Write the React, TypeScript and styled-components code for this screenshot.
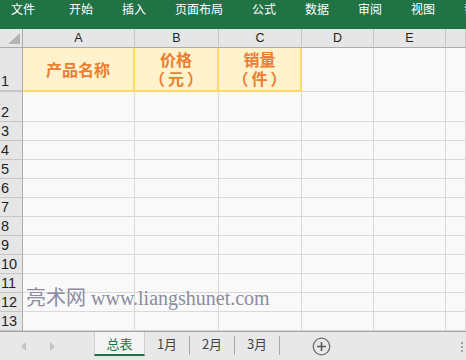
import React from "react";
import styled, { createGlobalStyle } from "styled-components";

const ribbonTabs = ["文件", "开始", "插入", "页面布局", "公式", "数据", "审阅", "视图", "帮助"];
const columns = ["A", "B", "C", "D", "E", ""];
const colWidths = "23px 112px 84px 83px 72px 72px 1fr";
const rowHeights = [44, 30, 19, 19, 19, 19, 19, 19, 19, 19, 19, 19, 19];
const sheetTabs = ["总表", "1月", "2月", "3月"];

// 第一行的表头内容
const titles: Record<number, string[]> = {
  0: ["产品名称"],
  1: ["价格", "（元）"],
  2: ["销量", "（件）"],
};

const App: React.FC = () => {
  return (
    <Frame>
      <GlobalStyle />
      <Ribbon>
        {ribbonTabs.map((t, i) => (
          <RibbonTab key={t} $first={i === 0}>
            {t}
          </RibbonTab>
        ))}
      </Ribbon>

      <SheetArea>
        <Grid style={{ gridTemplateRows: `19px ${rowHeights.map((h) => h + "px").join(" ")}` }}>
          <Corner>
            <svg width="12" height="11" viewBox="0 0 12 11">
              <polygon points="12,0 12,11 0,11" fill="#b4b4b4" />
            </svg>
          </Corner>
          {columns.map((c, i) => (
            <ColHead key={"h" + i}>{c}</ColHead>
          ))}

          {rowHeights.map((_, r) => (
            <React.Fragment key={"r" + r}>
              <RowHead $yellow={r === 0}>{r + 1}</RowHead>
              {columns.map((_, c) => {
                const lines = r === 0 ? titles[c] : undefined;
                if (lines)
                  return (
                    <Cell key={c} $fill>
                      {lines.map((l, k) => (
                        <TitleLine key={k} $paren={k === 1}>
                          {l}
                        </TitleLine>
                      ))}
                    </Cell>
                  );
                return <Cell key={c} />;
              })}
            </React.Fragment>
          ))}
        </Grid>
        <Watermark>亮术网 www.liangshunet.com</Watermark>
      </SheetArea>

      <TabBar>
        <NavArea>
          <Arrow width="5" height="9" viewBox="0 0 5 9">
            <polygon points="5,0 5,9 0,4.5" fill="#c4c4c4" />
          </Arrow>
          <Arrow width="5" height="9" viewBox="0 0 5 9">
            <polygon points="0,0 0,9 5,4.5" fill="#c4c4c4" />
          </Arrow>
        </NavArea>
        {sheetTabs.map((t, i) => (
          <React.Fragment key={t}>
            <SheetTab $active={i === 0}>{t}</SheetTab>
            {i > 0 && <Divider />}
          </React.Fragment>
        ))}
        <AddButton>
          <svg width="19" height="19" viewBox="0 0 19 19">
            <circle cx="9.5" cy="9.5" r="8.3" fill="none" stroke="#6e6e6e" strokeWidth="1.3" />
            <path d="M9.5 5v9M5 9.5h9" stroke="#5a5a5a" strokeWidth="1.6" />
          </svg>
        </AddButton>
        <Dots>
          <span />
          <span />
          <span />
        </Dots>
      </TabBar>
    </Frame>
  );
};

export default App;

const GlobalStyle = createGlobalStyle`
  body {
    margin: 0;
    background: #ffffff;
    overflow: hidden;
  }
`;

const Frame = styled.div`
  width: 466px;
  height: 360px;
  display: flex;
  flex-direction: column;
  overflow: hidden;
  font-family: "Liberation Sans", "Noto Sans CJK SC", sans-serif;
`;

const Ribbon = styled.div`
  height: 29px;
  flex: none;
  display: flex;
  align-items: flex-start;
  gap: 29px;
  padding: 1px 0 0 11px;
  box-sizing: border-box;
  background: #217346;
  overflow: hidden;
  white-space: nowrap;
`;

const RibbonTab = styled.div<{ $first?: boolean }>`
  flex: none;
  font-family: "Noto Sans CJK SC", sans-serif;
  font-size: 12px;
  line-height: 16px;
  color: #ffffff;
  margin-right: ${({ $first }) => ($first ? "5px" : "0")};
`;

const SheetArea = styled.div`
  position: relative;
  flex: none;
  height: 302px;
  overflow: hidden;
  background: #f9f9f9;
`;

const Grid = styled.div`
  display: grid;
  grid-template-columns: ${colWidths};
`;

const Corner = styled.div`
  background: #e6e6e6;
  border-right: 1px solid #ababab;
  border-bottom: 1px solid #ababab;
  box-sizing: border-box;
  display: flex;
  align-items: flex-end;
  justify-content: flex-end;
  padding: 0 2px 3px 0;
`;

const ColHead = styled.div`
  background: #e6e6e6;
  border-right: 1px solid #c6c6c6;
  border-bottom: 1px solid #ababab;
  box-sizing: border-box;
  font-size: 12.5px;
  line-height: 18px;
  color: #1f1f1f;
  text-align: center;
`;

const RowHead = styled.div<{ $yellow?: boolean }>`
  background: #e6e6e6;
  border-right: 1px solid #ababab;
  border-bottom: ${({ $yellow }) => ($yellow ? "2px" : "1px")} solid #c6c6c6;
  box-sizing: border-box;
  display: flex;
  align-items: flex-end;
  padding: 0 0 1px 1px;
  font-size: 14.5px;
  line-height: 16px;
  color: #1f1f1f;
`;

const Cell = styled.div<{ $fill?: boolean }>`
  box-sizing: border-box;
  background: ${({ $fill }) => ($fill ? "#fff2cc" : "transparent")};
  border-right: ${({ $fill }) => ($fill ? "2px solid #ffd966" : "1px solid #d9d9d9")};
  border-bottom: ${({ $fill }) => ($fill ? "2px solid #ffd966" : "1px solid #d9d9d9")};
  display: flex;
  flex-direction: column;
  align-items: center;
  justify-content: center;
`;

const TitleLine = styled.div<{ $paren?: boolean }>`
  font-family: "Noto Sans CJK SC", sans-serif;
  font-weight: 700;
  font-size: 16px;
  line-height: 19px;
  height: 19px;
  overflow: visible;
  color: #ed7d31;
  white-space: nowrap;
  letter-spacing: ${({ $paren }) => ($paren ? "3px" : "0")};
  margin-right: ${({ $paren }) => ($paren ? "-3px" : "0")};
`;

const Watermark = styled.div`
  position: absolute;
  left: 26px;
  top: 258px;
  font-family: "Liberation Serif", "Noto Sans CJK SC", serif;
  font-size: 20px;
  line-height: 22px;
  color: #8b8d9e;
  white-space: nowrap;
  pointer-events: none;
`;

const TabBar = styled.div`
  flex: 1;
  display: flex;
  align-items: flex-start;
  background: #e8e8e8;
  border-top: 1px solid #a3a3a3;
  box-sizing: border-box;
`;

const NavArea = styled.div`
  width: 94px;
  flex: none;
  display: flex;
  align-items: center;
  gap: 24px;
  padding: 10px 0 0 21px;
  box-sizing: border-box;
`;

const Arrow = styled.svg`
  display: block;
`;

const SheetTab = styled.div<{ $active?: boolean }>`
  flex: none;
  width: ${({ $active }) => ($active ? "51px" : "44px")};
  height: 24px;
  box-sizing: border-box;
  display: flex;
  align-items: center;
  justify-content: center;
  font-family: "Noto Sans CJK SC", sans-serif;
  font-size: 13px;
  color: ${({ $active }) => ($active ? "#217346" : "#444444")};
  background: ${({ $active }) => ($active ? "#f4f4f4" : "transparent")};
  border-bottom: 2px solid ${({ $active }) => ($active ? "#217346" : "transparent")};
  border-left: 1px solid ${({ $active }) => ($active ? "#cfcfcf" : "transparent")};
  border-right: 1px solid ${({ $active }) => ($active ? "#cfcfcf" : "transparent")};
  padding-top: 1px;
`;

const Divider = styled.div`
  flex: none;
  width: 1px;
  height: 19px;
  margin-top: 4px;
  background: #a8a8a8;
`;

const AddButton = styled.div`
  flex: none;
  margin: 5px 0 0 32px;
  display: flex;
`;

const Dots = styled.div`
  margin: 10px 3px 0 auto;
  display: flex;
  flex-direction: column;
  gap: 2px;

  span {
    display: block;
    width: 2px;
    height: 2px;
    background: #a0a0a0;
  }
`;
